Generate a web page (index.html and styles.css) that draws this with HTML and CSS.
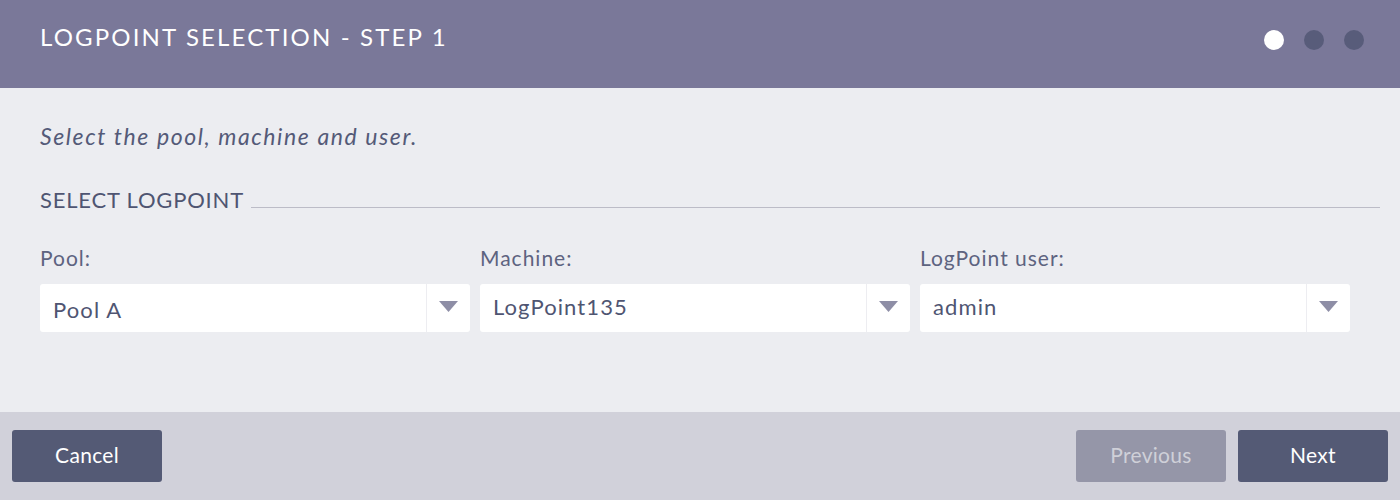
FILE: index.html
```html
<!DOCTYPE html>
<html>
<head>
<meta charset="utf-8">
<link rel="stylesheet" href="styles.css">
</head>
<body>
<div class="dialog">
  <header class="header">
    <h1 class="title">LOGPOINT SELECTION - STEP 1</h1>
    <div class="dots">
      <span class="dot active"></span>
      <span class="dot"></span>
      <span class="dot"></span>
    </div>
  </header>
  <main class="content">
    <p class="intro">Select the pool, machine and user.</p>
    <div class="section-head">
      <span class="section-title">SELECT LOGPOINT</span>
      <span class="section-line"></span>
    </div>
    <div class="fields">
      <div class="field">
        <label class="label">Pool:</label>
        <div class="select">
          <span class="value value-pool">Pool A</span>
          <span class="arrow"><svg width="19" height="11" viewBox="0 0 19 11"><path d="M0 0H19L9.5 11Z" fill="#8e8ea6"/></svg></span>
        </div>
      </div>
      <div class="field">
        <label class="label">Machine:</label>
        <div class="select">
          <span class="value">LogPoint135</span>
          <span class="arrow"><svg width="19" height="11" viewBox="0 0 19 11"><path d="M0 0H19L9.5 11Z" fill="#8e8ea6"/></svg></span>
        </div>
      </div>
      <div class="field">
        <label class="label">LogPoint user:</label>
        <div class="select">
          <span class="value">admin</span>
          <span class="arrow"><svg width="19" height="11" viewBox="0 0 19 11"><path d="M0 0H19L9.5 11Z" fill="#8e8ea6"/></svg></span>
        </div>
      </div>
    </div>
  </main>
  <footer class="footer">
    <button class="btn">Cancel</button>
    <div class="nav">
      <button class="btn btn-disabled">Previous</button>
      <button class="btn">Next</button>
    </div>
  </footer>
</div>
</body>
</html>
```
FILE: styles.css
```css
* { box-sizing: border-box; }
html, body {
  margin: 0;
  padding: 0;
  width: 1400px;
  height: 500px;
  overflow: hidden;
  font-family: "Lato", "Noto Sans", sans-serif;
  background: #ecedf1;
}
.dialog {
  display: flex;
  flex-direction: column;
  height: 500px;
}
.header {
  height: 88px;
  flex: none;
  background: #7a7899;
  display: flex;
  align-items: flex-start;
  justify-content: space-between;
  padding: 0 36px 0 40px;
}
.title {
  margin: 22px 0 0;
  font-size: 24px;
  font-weight: 400;
  letter-spacing: 2.15px;
  color: #ffffff;
  line-height: 30px;
}
.dots {
  display: flex;
  gap: 20px;
  margin-top: 30px;
}
.dot {
  width: 20px;
  height: 20px;
  border-radius: 50%;
  background: #585c7a;
}
.dot.active { background: #ffffff; }
.content {
  flex: 1;
  padding: 0 20px 0 40px;
  background: #ecedf1;
}
.intro {
  margin: 34px 0 0;
  font-size: 23px;
  font-style: italic;
  color: #545a78;
  line-height: 28px;
  letter-spacing: 1.6px;
}
.section-head {
  display: flex;
  align-items: flex-start;
  margin-top: 37px;
  height: 26px;
}
.section-title {
  font-size: 22px;
  color: #4f5572;
  line-height: 26px;
  letter-spacing: 0.8px;
}
.section-line {
  flex: 1;
  margin-left: 7px;
  margin-top: 20px;
  height: 1px;
  background: #bcbcc7;
}
.fields {
  display: flex;
  gap: 10px;
  margin-top: 33px;
  margin-right: 30px;
}
.field {
  flex: 1;
  display: flex;
  flex-direction: column;
}
.label {
  font-size: 21px;
  color: #5d6380;
  line-height: 24px;
  letter-spacing: 1px;
}
.select {
  margin-top: 14px;
  height: 48px;
  background: #ffffff;
  border-radius: 3px;
  display: flex;
  align-items: center;
}
.value {
  flex: 1;
  padding-left: 13px;
  padding-bottom: 4px;
  font-size: 22px;
  color: #4f5572;
  letter-spacing: 1.1px;
}
.value-pool { padding-top: 3px; padding-bottom: 0; }
.arrow {
  width: 44px;
  height: 100%;
  border-left: 1px solid #ededf1;
  display: flex;
  align-items: center;
  justify-content: center;
  padding-bottom: 3px;
}
.footer {
  height: 88px;
  flex: none;
  background: #d1d1da;
  display: flex;
  justify-content: space-between;
  align-items: flex-start;
  padding: 18px 12px 0;
}
.nav {
  display: flex;
  gap: 12px;
}
.btn {
  width: 150px;
  height: 52px;
  border: none;
  border-radius: 3px;
  background: #545a75;
  color: #ffffff;
  font-family: "Lato", "Noto Sans", sans-serif;
  font-size: 21px;
  letter-spacing: 0.3px;
  padding: 0 0 4px;
}
.btn-disabled {
  background: #9596a8;
  color: #cfd0d8;
}
```
